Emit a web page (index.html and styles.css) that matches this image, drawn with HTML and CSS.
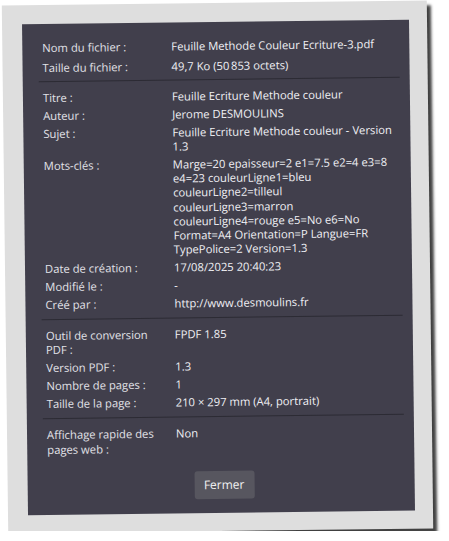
FILE: index.html
```html
<!DOCTYPE html>
<html lang="fr">
<head>
<meta charset="utf-8">
<title>Propriétés du document</title>
<link rel="stylesheet" href="styles.css">
</head>
<body>
<div class="card">
  <div class="panel">
    <div class="section">
      <div class="row"><div class="label">Nom du fichier :</div><div class="value">Feuille Methode Couleur Ecriture-3.pdf</div></div>
      <div class="row row-spaced"><div class="label">Taille du fichier :</div><div class="value">49,7 Ko (50&#8239;853 octets)</div></div>
    </div>
    <div class="sep sep-first"></div>
    <div class="section">
      <div class="row"><div class="label">Titre :</div><div class="value">Feuille Ecriture Methode couleur</div></div>
      <div class="row"><div class="label">Auteur :</div><div class="value">Jerome DESMOULINS</div></div>
      <div class="row"><div class="label">Sujet :</div><div class="value">Feuille Ecriture Methode couleur - Version 1.3</div></div>
      <div class="row"><div class="label">Mots-clés :</div><div class="value">Marge=20 epaisseur=2 e1=7.5 e2=4 e3=8 e4=23 couleurLigne1=bleu couleurLigne2=tilleul couleurLigne3=marron couleurLigne4=rouge e5=No e6=No Format=A4 Orientation=P Langue=FR TypePolice=2 Version=1.3</div></div>
      <div class="row"><div class="label">Date de création :</div><div class="value">17/08/2025 20:40:23</div></div>
      <div class="row"><div class="label">Modifié le :</div><div class="value">-</div></div>
      <div class="row"><div class="label">Créé par :</div><div class="value">http://www.desmoulins.fr</div></div>
    </div>
    <div class="sep"></div>
    <div class="section">
      <div class="row"><div class="label">Outil de conversion PDF :</div><div class="value">FPDF 1.85</div></div>
      <div class="row"><div class="label">Version PDF :</div><div class="value">1.3</div></div>
      <div class="row"><div class="label">Nombre de pages :</div><div class="value">1</div></div>
      <div class="row"><div class="label">Taille de la page :</div><div class="value">210 × 297 mm (A4, portrait)</div></div>
    </div>
    <div class="sep"></div>
    <div class="section">
      <div class="row"><div class="label">Affichage rapide des pages web :</div><div class="value">Non</div></div>
    </div>
    <div class="actions"><button class="btn" type="button">Fermer</button></div>
  </div>
</div>
</body>
</html>
```
FILE: styles.css
```css
html, body {
  margin: 0;
  padding: 0;
  background: #ffffff;
}

body {
  font-family: "Open Sans", "Noto Sans", "Liberation Sans", sans-serif;
  font-size: 11.25px;
}

.card {
  box-sizing: border-box;
  width: 425px;
  margin: 3px 0 0 5px;
  padding: 19px 18px 18px 20px;
  background: #dedede;
  box-shadow: 4px 5px 3px rgba(0, 0, 0, 0.75);
  transform: rotate(-0.7deg);
}

.panel {
  background: #413f4c;
  padding: 15px 10px 14px 16px;
  color: #ececf1;
}

.row {
  display: grid;
  grid-template-columns: 125px 1fr;
  column-gap: 4px;
  padding: 1.9px 0 1.9px 4px;
  line-height: 14.2px;
}

.row-spaced {
  padding-top: 3.9px;
}

.label {
  color: #e2e2e8;
}

.value {
  color: #f0f0f4;
}

.sep {
  height: 1px;
  background: #2c2b34;
  margin: 5px 0 7px 0;
}

.sep-first {
  margin-top: 4px;
}

.actions {
  display: flex;
  justify-content: center;
  margin-top: 14px;
}

.btn {
  width: 60px;
  height: 28px;
  border: none;
  border-radius: 3px;
  background: #57565f;
  color: #f2f2f2;
  font-family: "Open Sans", "Noto Sans", "Liberation Sans", sans-serif;
  font-size: 12px;
  padding: 0;
}
```
